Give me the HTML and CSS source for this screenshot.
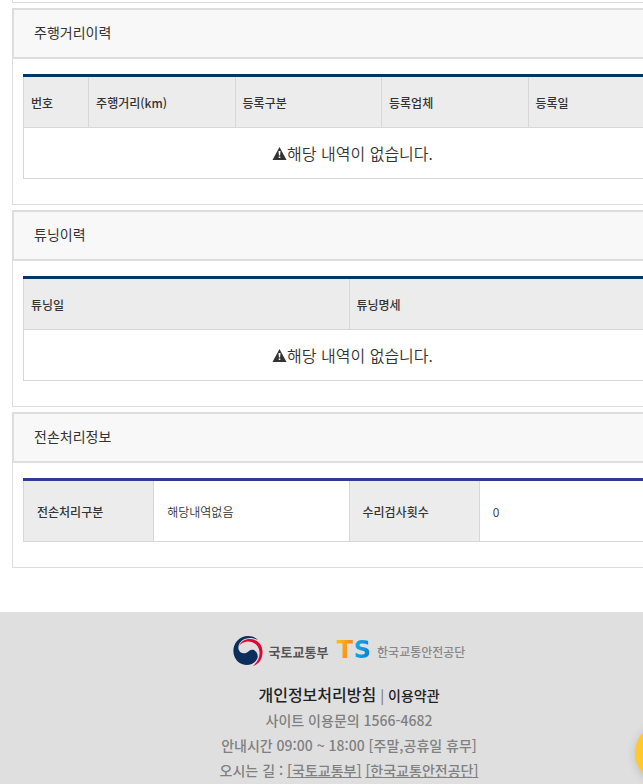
FILE: index.html
```html
<!DOCTYPE html>
<html lang="ko">
<head>
<meta charset="UTF-8">
<meta name="viewport" content="width=device-width, initial-scale=1">
<title>자동차 이력조회</title>
<link rel="stylesheet" href="styles.css">
</head>
<body>
<div class="page">
  <main class="content">
    <div class="card-end"></div>

    <section class="card">
      <h2 class="card-title">주행거리이력</h2>
      <div class="card-body">
        <table class="list">
          <colgroup>
            <col class="w-no"><col><col><col><col>
          </colgroup>
          <thead>
            <tr>
              <th scope="col">번호</th>
              <th scope="col">주행거리(km)</th>
              <th scope="col">등록구분</th>
              <th scope="col">등록업체</th>
              <th scope="col">등록일</th>
            </tr>
          </thead>
          <tbody>
            <tr>
              <td class="empty" colspan="5"><svg class="warn" viewBox="0 0 14 13" aria-hidden="true"><path d="M7 0L14 13H0Z"/><path class="mark" d="M6 4h2l-.4 4.500h-1.200zM6.200 9.500h1.600v1.600h-1.600z"/></svg>해당 내역이 없습니다.</td>
            </tr>
          </tbody>
        </table>
      </div>
    </section>

    <section class="card">
      <h2 class="card-title">튜닝이력</h2>
      <div class="card-body">
        <table class="list">
          <thead>
            <tr>
              <th scope="col">튜닝일</th>
              <th scope="col">튜닝명세</th>
            </tr>
          </thead>
          <tbody>
            <tr>
              <td class="empty" colspan="2"><svg class="warn" viewBox="0 0 14 13" aria-hidden="true"><path d="M7 0L14 13H0Z"/><path class="mark" d="M6 4h2l-.4 4.500h-1.200zM6.200 9.500h1.600v1.600h-1.600z"/></svg>해당 내역이 없습니다.</td>
            </tr>
          </tbody>
        </table>
      </div>
    </section>

    <section class="card">
      <h2 class="card-title">전손처리정보</h2>
      <div class="card-body">
        <table class="list info">
          <colgroup>
            <col class="w-label"><col><col class="w-label"><col>
          </colgroup>
          <tbody>
            <tr>
              <th scope="row">전손처리구분</th>
              <td>해당내역없음</td>
              <th scope="row">수리검사횟수</th>
              <td>0</td>
            </tr>
          </tbody>
        </table>
      </div>
    </section>
  </main>

  <footer class="footer">
    <div class="logos">
      <svg class="emblem" viewBox="0 0 30 30" aria-hidden="true">
        <path fill="#e4032e" d="M6 10C8 5 13 2.500 18 3C25 4 29.500 9 29.500 16C29.500 23 26 28.500 20 29.700C25 26 27 21 26.500 16C26 9 20 5 14 5.500C10 6 7.500 8 6 10Z"/>
        <path fill="#0b2e5c" d="M25 4C20 -1 10 -2 4 5C-2 12 0 22 6 26.500C12 31 22 29 24.500 22C26 16 20 11.500 16 15C12 19 6.500 17.500 5.500 13C4.500 7 10 2 17 2C20 2 23 3 25 4Z"/>
      </svg>
      <span class="molit">국토교통부</span>
      <span class="ts"><b class="ts-t">T</b><b class="ts-s">S</b></span>
      <span class="kotsa">한국교통안전공단</span>
    </div>
    <p class="policy"><a class="privacy" href="#">개인정보처리방침</a> | <a class="terms" href="#">이용약관</a></p>
    <p>사이트 이용문의 1566-4682</p>
    <p>안내시간 09:00 ~ 18:00 [주말,공휴일 휴무]</p>
    <p>오시는 길 : <a href="#">[국토교통부]</a> <a href="#">[한국교통안전공단]</a></p>
  </footer>

  <button class="floating" type="button" aria-label="상담"></button>
</div>
</body>
</html>
```

FILE: styles.css
```css
* {
  box-sizing: border-box;
}

body {
  margin: 0;
  overflow-x: hidden;
  background: #fff;
  color: #333;
  font-family: "Noto Sans CJK KR", "Noto Sans KR", sans-serif;
  font-size: 14px;
}

.page {
  position: relative;
  display: flex;
  flex-direction: column;
  min-width: 698px;
  min-height: 100vh;
}

.content {
  display: flex;
  flex-direction: column;
  gap: 5px;
  padding: 0 13px 44px 12px;
}

/* bottom edge of the section above */
.card-end {
  height: 3px;
  border: 1px solid #ddd;
  border-top: 0;
}

.card {
  border: 1px solid #ddd;
  border-top: 0;
}

.card-title {
  margin: 0 -1px 0 -1px;
  padding: 0 20px 2px;
  border: 2px solid #ddd;
  background: #f8f8f8;
  font-size: 14px;
  font-weight: 400;
  line-height: 45px;
}

.card-body {
  padding: 15px 10px 25px;
}

/* tables */
.list {
  width: 100%;
  table-layout: fixed;
  border-collapse: separate;
  border-spacing: 0;
  border-top: 3px solid #003764;
  font-size: 12px;
}

.list th,
.list td {
  height: 51px;
  padding: 0 7px;
  border-left: 1px solid #d7d7d7;
  border-bottom: 1px solid #d7d7d7;
  text-align: left;
}

.list th {
  background: #ececec;
  font-weight: 500;
}

.list .empty {
  padding: 0 0 0 7px;
  font-size: 16px;
  font-weight: 350;
  text-align: center;
}

.w-no {
  width: 10%;
}

.w-label {
  width: 20%;
}

.info {
  border-top-color: #2e3d93;
}

.info th,
.info td {
  height: 61px;
  padding: 0 13px;
}

.info td {
  font-weight: 350;
}

.warn {
  width: 15px;
  height: 13px;
  fill: #333;
}

.warn .mark {
  fill: #fff;
}

/* footer */
.footer {
  flex: 1;
  padding: 22px 0 0;
  background: #dfdfdf;
  color: #808080;
  font-weight: 500;
  text-align: center;
}

.footer p {
  margin: 0;
  line-height: 25px;
}

.footer a {
  color: inherit;
}

.logos {
  display: flex;
  align-items: center;
  justify-content: center;
  height: 34px;
  margin-bottom: 14px;
}

.emblem {
  width: 30px;
  height: 30px;
  margin-right: 6px;
}

.molit {
  color: #555;
  font-size: 13px;
  font-weight: 700;
}

.ts {
  display: flex;
  gap: 1px;
  margin: 0 6px 2px 8px;
  font-family: "DejaVu Sans", sans-serif;
  font-size: 24px;
  line-height: 28px;
}

.ts-t,
.ts-s {
  background: linear-gradient(100deg, #fdb913 20%, #f58220 80%);
  -webkit-background-clip: text;
  background-clip: text;
  color: transparent;
}

.ts-s {
  background-image: linear-gradient(100deg, #12a9e2 20%, #0a84d4 80%);
}

.kotsa {
  color: #888;
  font-size: 12px;
  font-weight: 500;
}

.footer .policy a {
  color: #222;
  font-weight: 500;
  text-decoration: none;
}

.policy .privacy {
  font-size: 16px;
}

.floating {
  position: absolute;
  right: 3px;
  bottom: 1px;
  width: 60px;
  height: 60px;
  padding: 0;
  border: 0;
  border-radius: 50%;
  background: #ffc82c;
  box-shadow: 0 2px 10px rgba(0, 0, 0, 0.15);
  cursor: pointer;
}
```
